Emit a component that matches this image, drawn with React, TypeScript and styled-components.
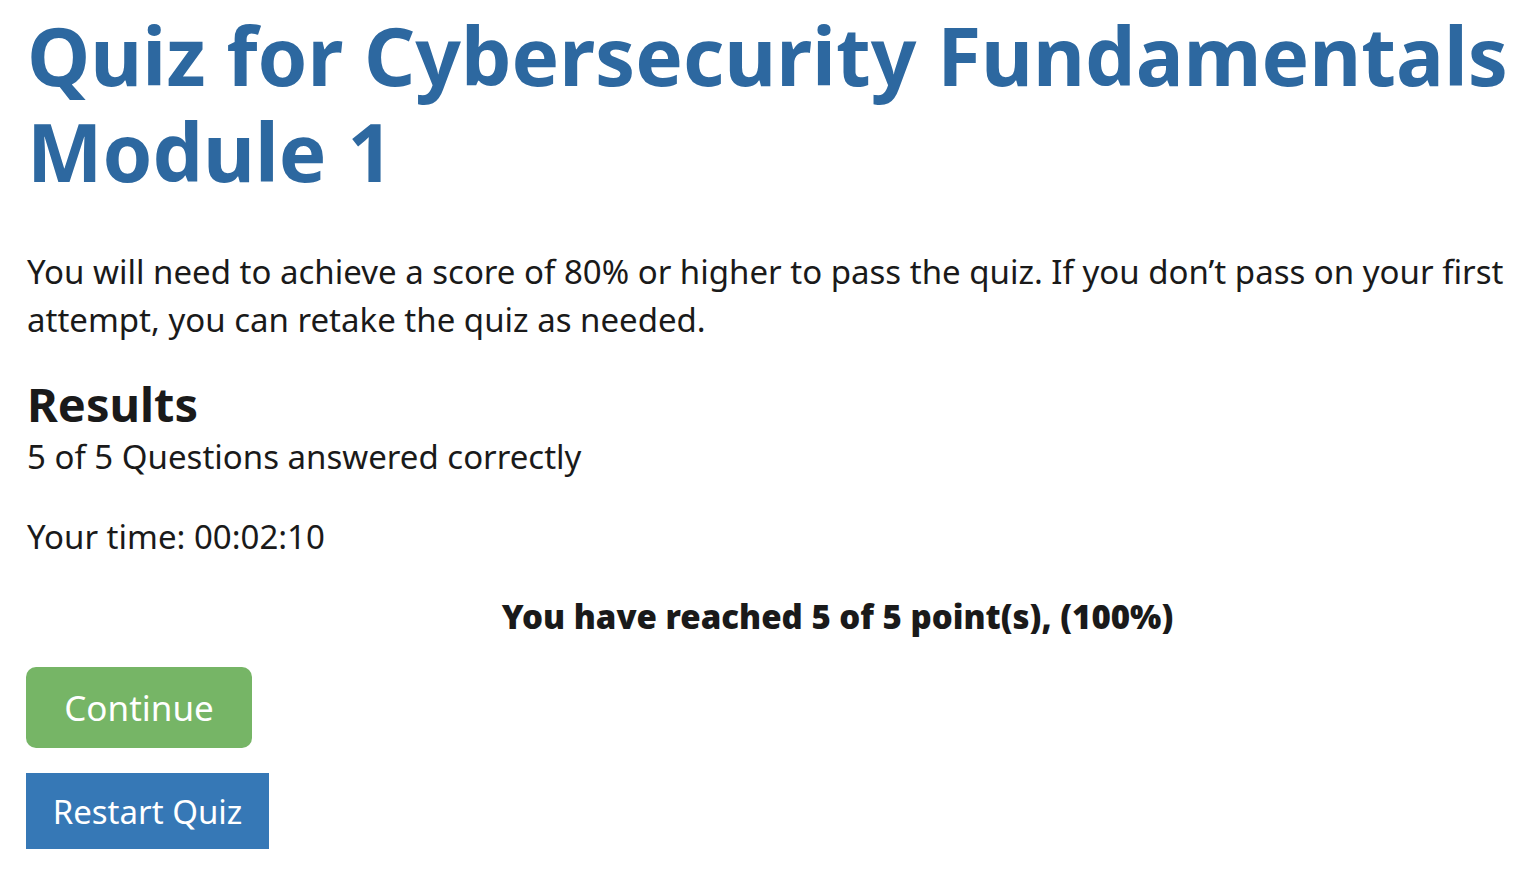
import React from 'react';
import styled, { createGlobalStyle } from 'styled-components';

const GlobalStyle = createGlobalStyle`
  html, body {
    margin: 0;
    padding: 0;
    background: #ffffff;
  }
  body {
    font-family: "Noto Sans", "Open Sans", sans-serif;
    color: #1a1a1a;
  }
`;

const Page = styled.div`
  padding: 7px 14px 0 27px;
  display: flex;
  flex-direction: column;
  align-items: flex-start;
`;

const Title = styled.h1`
  margin: 0;
  font-size: 80px;
  line-height: 96px;
  font-weight: 700;
  color: #2d68a0;
`;

const Intro = styled.p`
  margin: 49px 0 0;
  font-size: 33px;
  line-height: 48px;
  color: #1a1a1a;
`;

const ResultsHeading = styled.h2`
  margin: 35px 0 0;
  font-size: 47px;
  line-height: 50px;
  font-weight: 700;
`;

const Line = styled.p<{ $gap: number }>`
  margin: ${(p) => p.$gap}px 0 0;
  font-size: 33px;
  line-height: 40px;
`;

const Points = styled.p`
  align-self: stretch;
  margin: 40px 0 0;
  padding-left: 133px;
  text-align: center;
  font-size: 33px;
  line-height: 40px;
  font-weight: 900;
`;

const Button = styled.button<{ $variant: 'green' | 'blue' }>`
  border: none;
  cursor: pointer;
  font-family: inherit;
  color: #ffffff;
  font-size: ${(p) => (p.$variant === 'green' ? 35 : 33)}px;
  background: ${(p) => (p.$variant === 'green' ? '#76b566' : '#3678b6')};
  border-radius: ${(p) => (p.$variant === 'green' ? 10 : 0)}px;
  width: ${(p) => (p.$variant === 'green' ? 226 : 243)}px;
  height: ${(p) => (p.$variant === 'green' ? 81 : 76)}px;
  margin-top: ${(p) => (p.$variant === 'green' ? 30 : 25)}px;
  margin-left: -1px;
  padding: 0;
`;

export default function App() {
  return (
    <>
      <GlobalStyle />
      <Page>
        <Title>Quiz for Cybersecurity Fundamentals Module 1</Title>
        <Intro>
          You will need to achieve a score of 80% or higher to pass the quiz. If you don’t pass on your first
          attempt, you can retake the quiz as needed.
        </Intro>
        <ResultsHeading>Results</ResultsHeading>
        <Line $gap={8}>5 of 5 Questions answered correctly</Line>
        <Line $gap={40}>Your time: 00:02:10</Line>
        <Points>You have reached 5 of 5 point(s), (100%)</Points>
        <Button $variant="green">Continue</Button>
        <Button $variant="blue">Restart Quiz</Button>
      </Page>
    </>
  );
}
